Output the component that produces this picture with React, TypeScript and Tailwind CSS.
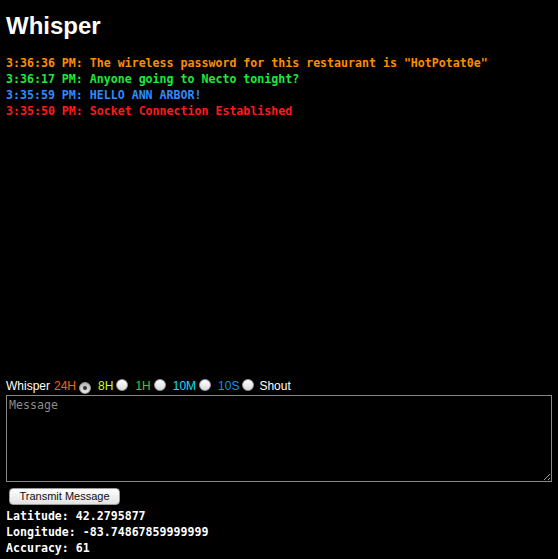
const mono = { fontFamily: '"DejaVu Sans Mono", "Liberation Mono", monospace' };

const messages = [
  { time: '3:36:36 PM', text: 'The wireless password for this restaurant is "HotPotat0e"', color: 'text-[#ff8c00]' },
  { time: '3:36:17 PM', text: 'Anyone going to Necto tonight?', color: 'text-[#1ee83c]' },
  { time: '3:35:59 PM', text: 'HELLO ANN ARBOR!', color: 'text-[#2f8cff]' },
  { time: '3:35:50 PM', text: 'Socket Connection Established', color: 'text-[#ff1a1a]' },
];

const ranges = [
  { label: '24H', color: 'text-[#ff6000]' },
  { label: '8H', color: 'text-[#ccff00]' },
  { label: '1H', color: 'text-[#00e040]' },
  { label: '10M', color: 'text-[#00e0ff]' },
  { label: '10S', color: 'text-[#1e88ff]' },
];

function Radio({ checked }: { checked?: boolean }) {
  return (
    <span
      className={`inline-flex h-[12px] w-[12px] items-center justify-center rounded-full border border-[#9a9a9a] ${
        checked ? 'bg-gradient-to-b from-[#b8b8b8] to-[#e8e8e8]' : 'bg-gradient-to-b from-[#ffffff] to-[#dcdcdc]'
      }`}
    >
      {checked && <span className="h-[4px] w-[4px] rounded-full bg-[#333]" />}
    </span>
  );
}

export default function App() {
  return (
    <div className="min-h-screen bg-black px-[6px] text-white" style={{ fontFamily: '"Liberation Sans", Arial, sans-serif' }}>
      <h1 className="pt-[12px] text-[24px] font-bold leading-[28px]">Whisper</h1>

      <div className="mt-[15px] h-[324px] text-[11.6px] font-bold leading-[16px]" style={mono}>
        {messages.map((m) => (
          <div key={m.time} className={m.color}>
            {m.time}: {m.text}
          </div>
        ))}
      </div>

      <div className="flex h-[14px] items-center text-[12px] leading-[14px]">
        <span className="text-white">Whisper</span>
        {ranges.map((r, i) => (
          <span key={r.label} className="ml-[4px] flex items-center">
            <span className={`${r.color} ${i > 0 ? 'ml-[3px]' : ''}`}>{r.label}</span>
            <span className="ml-[3px]">
              <Radio checked={i === 0} />
            </span>
          </span>
        ))}
        <span className="ml-[5px] text-white">Shout</span>
      </div>

      <textarea
        placeholder="Message"
        className="mt-[2px] block h-[87px] w-full resize border border-[#888] bg-black px-[2px] py-[1px] text-[11.6px] text-white placeholder:text-[#8a8a8a]"
        style={mono}
      />

      <button className="mt-[6px] ml-[3px] block h-[17px] w-[111px] rounded-[4px] border border-[#9a9a9a] bg-gradient-to-b from-[#ffffff] to-[#e2e2e2] text-[11px] leading-[15px] text-[#111]">
        Transmit Message
      </button>

      <div className="mt-[3px] text-[11.6px] font-bold leading-[16px]" style={mono}>
        <div>Latitude: 42.2795877</div>
        <div>Longitude: -83.74867859999999</div>
        <div>Accuracy: 61</div>
      </div>
    </div>
  );
}
